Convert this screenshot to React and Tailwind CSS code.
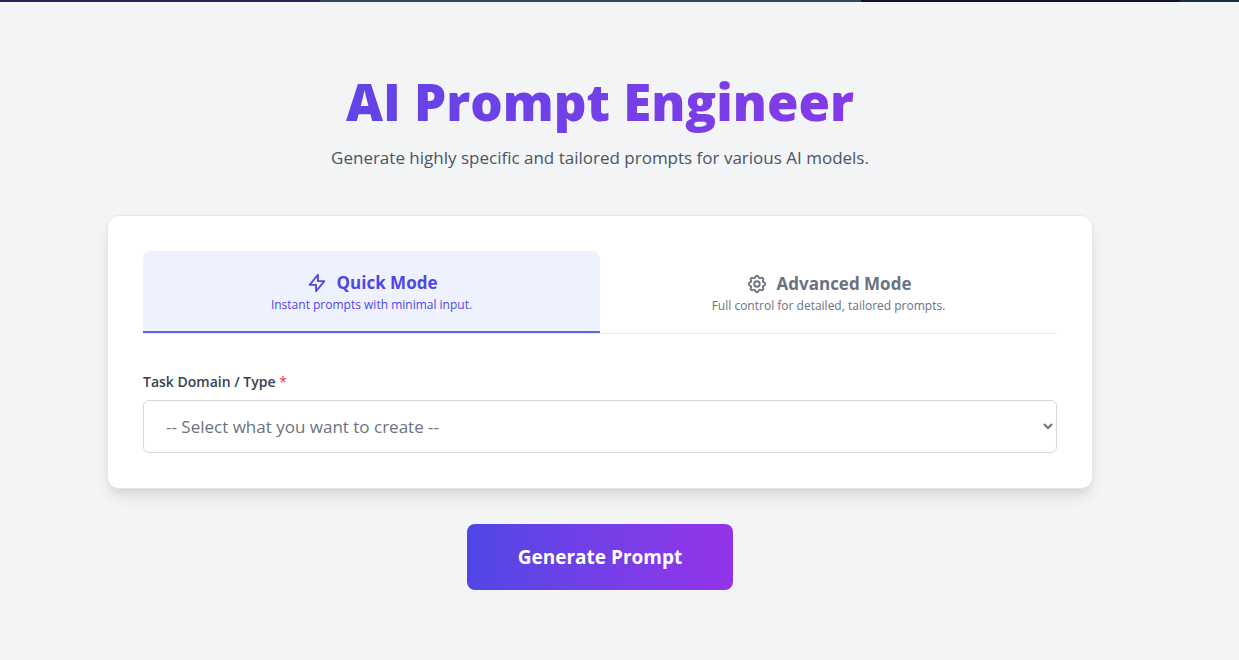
import { useState } from "react";

const domains = ["Image", "Text", "Code", "Video"];

function BoltIcon() {
  return (
    <svg className="h-[22px] w-[22px]" fill="none" viewBox="0 0 24 24" stroke="currentColor" strokeWidth="2" strokeLinecap="round" strokeLinejoin="round" aria-hidden="true">
      <path d="M13 10V3L4 14h7v7l9-11h-7z" />
    </svg>
  );
}

function CogIcon() {
  return (
    <svg className="h-[22px] w-[22px]" fill="none" viewBox="0 0 24 24" stroke="currentColor" strokeWidth="2" strokeLinecap="round" strokeLinejoin="round" aria-hidden="true">
      <path d="M10.325 4.317c.426-1.756 2.924-1.756 3.35 0a1.724 1.724 0 002.573 1.066c1.543-.94 3.31.826 2.37 2.37a1.724 1.724 0 001.065 2.572c1.756.426 1.756 2.924 0 3.35a1.724 1.724 0 00-1.066 2.573c.94 1.543-.826 3.31-2.37 2.37a1.724 1.724 0 00-2.572 1.065c-.426 1.756-2.924 1.756-3.35 0a1.724 1.724 0 00-2.573-1.066c-1.543.94-3.31-.826-2.37-2.37a1.724 1.724 0 00-1.065-2.572c-1.756-.426-1.756-2.924 0-3.35a1.724 1.724 0 001.066-2.573c-.94-1.543.826-3.31 2.37-2.37.996.608 2.296.07 2.572-1.065z" />
      <path d="M15 12a3 3 0 11-6 0 3 3 0 016 0z" />
    </svg>
  );
}

const modes = [
  { id: "quick", title: "Quick Mode", text: "Instant prompts with minimal input.", Icon: BoltIcon },
  { id: "advanced", title: "Advanced Mode", text: "Full control for detailed, tailored prompts.", Icon: CogIcon },
];

export default function App() {
  const [mode, setMode] = useState("quick");
  const [domain, setDomain] = useState("");

  return (
    <div className="flex min-h-screen flex-col bg-[#f3f4f6] font-['Open_Sans','Noto_Sans',sans-serif]">
      <div className="flex h-[2px]" aria-hidden="true">
        <div className="flex-[320] bg-[#2b2053]" />
        <div className="flex-[541] bg-[#2c4960]" />
        <div className="flex-[319] bg-[#15102c]" />
        <div className="flex-[59] bg-[#1b2e49]" />
      </div>

      <main className="flex flex-col items-center pt-16 pr-[146px] pb-[70px] pl-[107px]">
        <header className="w-full text-center">
          <h1 className="bg-gradient-to-r from-[#4f46e5] to-[#9333ea] bg-clip-text text-[51px] leading-[70px] font-extrabold text-transparent">
            AI Prompt Engineer
          </h1>
          <p className="mt-2 text-[17px] leading-7 text-[#4b5563]">
            Generate highly specific and tailored prompts for various AI models.
          </p>
        </header>

        <section className="mt-[43px] w-full rounded-xl border border-gray-200 bg-white p-[35px] shadow-[0_10px_15px_-3px_rgba(0,0,0,0.1),0_4px_6px_-2px_rgba(0,0,0,0.06)]">
          <div role="tablist" className="grid grid-cols-2 border-b border-gray-200">
            {modes.map(({ id, title, text, Icon }) => (
              <button
                key={id}
                type="button"
                role="tab"
                aria-selected={mode === id}
                onClick={() => setMode(id)}
                className={
                  "flex h-[82px] flex-col items-center justify-center rounded-t-lg pt-1 " +
                  (mode === id ? "border-b-2 border-[#6366d8] bg-[#eef2ff] text-[#4f46e5]" : "text-[#6b7280]")
                }
              >
                <span className="flex items-center gap-[9px] text-[17px] leading-6 font-bold">
                  <Icon />
                  {title}
                </span>
                <span className="text-[12px] leading-5">{text}</span>
              </button>
            ))}
          </div>

          <label htmlFor="domain" className="mt-9 block text-[14px] leading-6 font-semibold text-[#374151]">
            Task Domain / Type <span className="font-normal text-red-500">*</span>
          </label>
          <select
            id="domain"
            value={domain}
            onChange={(e) => setDomain(e.target.value)}
            className="mt-[6px] block h-[53px] w-full rounded-md border border-gray-300 bg-white pl-[18px] text-[17px] text-[#6b7280]"
          >
            <option value="">-- Select what you want to create --</option>
            {domains.map((d) => (
              <option key={d}>{d}</option>
            ))}
          </select>
        </section>

        <button
          type="button"
          className="mt-[35px] h-[66px] rounded-lg bg-gradient-to-r from-[#4f46e5] to-[#9333ea] px-[51px] text-[19px] font-bold text-white"
        >
          Generate Prompt
        </button>
      </main>
    </div>
  );
}
